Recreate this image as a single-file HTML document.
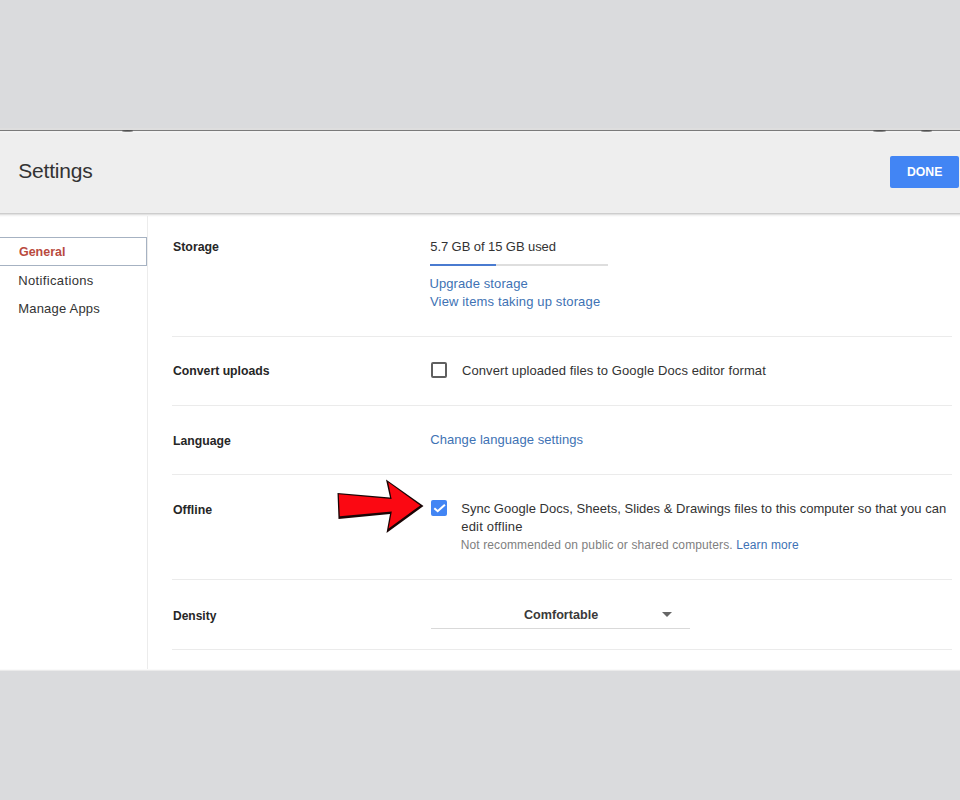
<!DOCTYPE html>
<html><head><meta charset="utf-8">
<style>
html,body{margin:0;padding:0;}
body{width:960px;height:800px;position:relative;overflow:hidden;background:#dadbdd;font-family:"Liberation Sans",sans-serif;}
.a{position:absolute;white-space:nowrap;line-height:1;}
.r{position:absolute;}
.div{position:absolute;left:172px;width:780px;height:1px;background:#ebebeb;}

</style></head>
<body>
<div class="r" style="left:0;top:128px;width:960px;height:2px;background:#dedede;"></div>
<div class="r" style="left:0;top:130px;width:960px;height:1px;background:#7a7a7a;"></div>
<div class="r" style="left:0;top:131px;width:960px;height:81px;background:#eeeeee;"></div>
<div class="r" style="left:0;top:131px;width:960px;height:2px;background:#f2f2f2;"></div>
<div class="r" style="left:0;top:212px;width:960px;height:1px;background:#efefef;"></div>
<div class="r" style="left:0;top:213px;width:960px;height:1px;background:#cdcdcd;"></div>
<div class="r" style="left:0;top:214px;width:960px;height:456px;background:#ffffff;"></div>
<div class="r" style="left:0;top:214px;width:960px;height:1px;background:#e2e2e2;"></div>
<div class="r" style="left:0;top:215px;width:960px;height:1px;background:#f3f3f3;"></div>
<div class="r" style="left:0;top:216px;width:960px;height:1px;background:#fbfbfb;"></div>
<div class="r" style="left:147px;top:216px;width:1px;height:454px;background:#ececec;"></div>
<div class="r" style="left:0;top:669px;width:960px;height:1px;background:#fafafa;"></div>
<div class="r" style="left:0;top:670px;width:960px;height:1px;background:#ebebeb;"></div>
<div class="r" style="left:122px;top:129.5px;width:11px;height:2px;border-radius:50%;background:#2a2a2a;opacity:.55;"></div>
<div class="r" style="left:873px;top:129.5px;width:13px;height:2px;border-radius:50%;background:#2a2a2a;opacity:.55;"></div>
<div class="r" style="left:921px;top:129.5px;width:11px;height:2px;border-radius:50%;background:#2a2a2a;opacity:.55;"></div>
<div class="r" style="left:890px;top:156px;width:69px;height:32px;background:#4285f4;border-radius:2px;"></div>
<div class="r" style="left:-2px;top:237px;width:147px;height:27px;border:1px solid #a6b2c2;"></div>
<div class="div" style="top:336px"></div>
<div class="div" style="top:405px"></div>
<div class="div" style="top:474px"></div>
<div class="div" style="top:579px"></div>
<div class="div" style="top:649px"></div>
<div class="r" style="left:430px;top:264px;width:178px;height:2px;background:#dedede;"></div>
<div class="r" style="left:430px;top:263.5px;width:66px;height:2.5px;background:#4a7bd0;"></div>
<div class="r" style="left:431px;top:362px;width:12px;height:12px;border:2px solid #5f5f5f;border-radius:2px;"></div>
<div class="r" style="left:431px;top:500px;width:16px;height:16px;background:#4285f4;border-radius:2px;"></div>
<svg class="r" style="left:431px;top:500px;" width="16" height="16" viewBox="0 0 16 16"><path d="M3.3 8.2 L6.7 11.2 L13.9 4.7" fill="none" stroke="#fff" stroke-width="2"/></svg>
<svg class="r" style="left:662px;top:612px;" width="10" height="5" viewBox="0 0 10 5"><path d="M0 0 L10 0 L5 5 Z" fill="#666"/></svg>
<div class="r" style="left:431px;top:628px;width:259px;height:1px;background:#d9d9d9;"></div>
<svg class="r" style="left:330px;top:472px;" width="100" height="66" viewBox="330 472 100 66">
<path d="M337.5 493 L390 497.5 L386 479.5 L423.5 506 L386.5 533 L390 514 L338.5 519 Z" fill="#1a0505"/>
<path d="M338.8 494.3 L391.6 498.9 L388.2 482.2 L420.2 505.4 L388.6 528.6 L391.8 511.4 L339.8 516.3 Z" fill="#fb0812"/>
</svg>

<div class="a" id="t_settings" style="left:18.30px;top:160.12px;font-size:21px;letter-spacing:-0.200px;color:#333;">Settings</div>
<div class="a" id="t_done" style="left:906.94px;top:164.97px;font-size:13.5px;letter-spacing:0.000px;color:#fff;font-weight:bold;transform:scaleX(0.9063);transform-origin:0px 0;">DONE</div>
<div class="a" id="t_general" style="left:18.75px;top:244.79px;font-size:13px;letter-spacing:0.000px;color:#b94a3e;font-weight:bold;transform:scaleX(0.9586);transform-origin:0px 0;">General</div>
<div class="a" id="t_notif" style="left:18.21px;top:273.69px;font-size:13px;letter-spacing:0.360px;color:#333;">Notifications</div>
<div class="a" id="t_apps" style="left:18.21px;top:301.79px;font-size:13px;letter-spacing:0.208px;color:#333;">Manage Apps</div>
<div class="a" id="t_storage" style="left:172.50px;top:239.59px;font-size:13px;letter-spacing:0.000px;color:#262626;font-weight:bold;transform:scaleX(0.9502);transform-origin:0px 0;">Storage</div>
<div class="a" id="t_used" style="left:430.24px;top:239.79px;font-size:13px;letter-spacing:-0.076px;color:#333;">5.7 GB of 15 GB used</div>
<div class="a" id="t_upgrade" style="left:429.44px;top:277.29px;font-size:13px;letter-spacing:0.103px;color:#4072b4;">Upgrade storage</div>
<div class="a" id="t_view" style="left:430.00px;top:294.99px;font-size:13px;letter-spacing:0.154px;color:#4072b4;">View items taking up storage</div>
<div class="a" id="t_convert" style="left:172.50px;top:364.24px;font-size:13px;letter-spacing:0.000px;color:#262626;font-weight:bold;transform:scaleX(0.9413);transform-origin:0px 0;">Convert uploads</div>
<div class="a" id="t_convtxt" style="left:461.98px;top:363.79px;font-size:13px;letter-spacing:0.093px;color:#333;">Convert uploaded files to Google Docs editor format</div>
<div class="a" id="t_lang" style="left:172.50px;top:433.74px;font-size:13px;letter-spacing:0.000px;color:#262626;font-weight:bold;transform:scaleX(0.9413);transform-origin:0px 0;">Language</div>
<div class="a" id="t_langlnk" style="left:430.20px;top:433.29px;font-size:13px;letter-spacing:0.077px;color:#4072b4;">Change language settings</div>
<div class="a" id="t_offline" style="left:172.50px;top:502.99px;font-size:13px;letter-spacing:0.000px;color:#262626;font-weight:bold;transform:scaleX(0.9514);transform-origin:0px 0;">Offline</div>
<div class="a" id="t_sync" style="left:461.20px;top:502.29px;font-size:13px;letter-spacing:0.030px;color:#333;">Sync Google Docs, Sheets, Slides &amp; Drawings files to this computer so that you can</div>
<div class="a" id="t_edit" style="left:461.22px;top:520.24px;font-size:13px;letter-spacing:0.204px;color:#333;">edit offline</div>
<div class="a" id="t_notrec" style="left:460.70px;top:539.24px;font-size:12px;letter-spacing:0.114px;color:#808080;">Not recommended on public or shared computers. <span style="color:#4072b4">Learn more</span></div>
<div class="a" id="t_density" style="left:172.50px;top:608.59px;font-size:13px;letter-spacing:0.000px;color:#262626;font-weight:bold;transform:scaleX(0.9234);transform-origin:0px 0;">Density</div>
<div class="a" id="t_comf" style="left:523.50px;top:607.79px;font-size:13px;letter-spacing:0.000px;color:#3a3a3a;font-weight:bold;transform:scaleX(0.9685);transform-origin:0px 0;">Comfortable</div>
</body></html>
